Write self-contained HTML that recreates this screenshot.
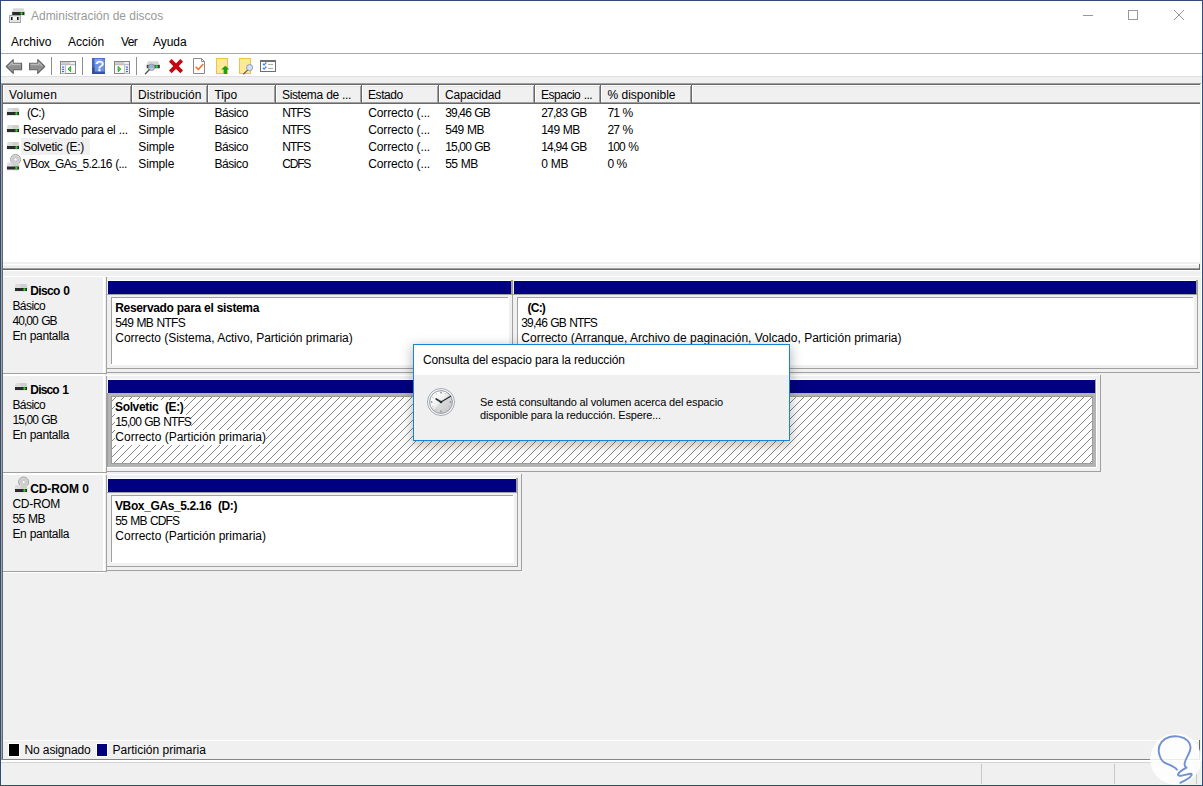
<!DOCTYPE html>
<html lang="es">
<head>
<meta charset="utf-8">
<title>Administración de discos</title>
<style>
html,body{margin:0;padding:0;}
body{width:1203px;height:786px;overflow:hidden;background:#fff;position:relative;font-family:"Liberation Sans",sans-serif;font-size:12px;color:#000;}
.a{position:absolute;}
.t{position:absolute;white-space:nowrap;line-height:15px;height:15px;margin-top:1px;}
.b{font-weight:bold;}
.g{background:#f0f0f0;}
.navy{background:#000080;}
.ln{position:absolute;background:#a0a0a0;}
.dk{position:absolute;background:#696969;}
.wh{position:absolute;background:#fff;}
</style>
</head>
<body>
<!-- window frame -->
<div class="a" style="left:0;top:0;width:1203px;height:786px;background:#324c7a;"></div>
<div class="a" style="left:1px;top:1px;width:1201px;height:784px;background:#fff;"></div>

<!-- title bar -->
<div class="t" style="left:31px;top:8px;letter-spacing:-0.024px;word-spacing:0.024px;color:#999;">Administración de discos</div>
<!-- menu -->
<div class="t" style="left:11px;top:34px;letter-spacing:0.083px;">Archivo</div>
<div class="t" style="left:68px;top:34px;letter-spacing:0.028px;">Acción</div>
<div class="t" style="left:121px;top:34px;letter-spacing:-0.605px;">Ver</div>
<div class="t" style="left:153px;top:34px;letter-spacing:-0.043px;">Ayuda</div>
<div class="a" style="left:1px;top:53px;width:1201px;height:1px;background:#a8a8a8;"></div>
<!-- gray client background -->
<div class="a g" style="left:1px;top:76px;width:1201px;height:709px;"></div>
<div class="a" style="left:1px;top:76px;width:1201px;height:1px;background:#dfdfdf;"></div>
<!-- list view -->
<div id="list">
<div class="ln" style="left:1px;top:83px;width:1200px;height:1px;"></div>
<div class="dk" style="left:2px;top:84px;width:1198px;height:1px;"></div>
<div class="ln" style="left:1px;top:83px;width:1px;height:677px;"></div>
<div class="dk" style="left:2px;top:84px;width:1px;height:676px;"></div>
<div class="wh" style="left:1201px;top:83px;width:1px;height:678px;"></div>
<div class="wh" style="left:3px;top:85px;width:1197px;height:177px;"></div>
<div class="a g" style="left:4px;top:86px;width:1196px;height:16px;"></div>
<div class="a" style="left:4px;top:86px;width:1196px;height:1px;background:#e6e6e6;"></div>
<div class="ln" style="left:3px;top:102px;width:1197px;height:1px;"></div>
<div class="dk" style="left:3px;top:103px;width:1197px;height:1px;"></div>
<div class="ln" style="left:130px;top:86px;width:1px;height:16px;"></div>
<div class="dk" style="left:131px;top:85px;width:1px;height:18px;"></div>
<div class="wh" style="left:132px;top:85px;width:1px;height:17px;"></div>
<div class="ln" style="left:206px;top:86px;width:1px;height:16px;"></div>
<div class="dk" style="left:207px;top:85px;width:1px;height:18px;"></div>
<div class="wh" style="left:208px;top:85px;width:1px;height:17px;"></div>
<div class="ln" style="left:274px;top:86px;width:1px;height:16px;"></div>
<div class="dk" style="left:275px;top:85px;width:1px;height:18px;"></div>
<div class="wh" style="left:276px;top:85px;width:1px;height:17px;"></div>
<div class="ln" style="left:360px;top:86px;width:1px;height:16px;"></div>
<div class="dk" style="left:361px;top:85px;width:1px;height:18px;"></div>
<div class="wh" style="left:362px;top:85px;width:1px;height:17px;"></div>
<div class="ln" style="left:437px;top:86px;width:1px;height:16px;"></div>
<div class="dk" style="left:438px;top:85px;width:1px;height:18px;"></div>
<div class="wh" style="left:439px;top:85px;width:1px;height:17px;"></div>
<div class="ln" style="left:533px;top:86px;width:1px;height:16px;"></div>
<div class="dk" style="left:534px;top:85px;width:1px;height:18px;"></div>
<div class="wh" style="left:535px;top:85px;width:1px;height:17px;"></div>
<div class="ln" style="left:599px;top:86px;width:1px;height:16px;"></div>
<div class="dk" style="left:600px;top:85px;width:1px;height:18px;"></div>
<div class="wh" style="left:601px;top:85px;width:1px;height:17px;"></div>
<div class="ln" style="left:690px;top:86px;width:1px;height:16px;"></div>
<div class="dk" style="left:691px;top:85px;width:1px;height:18px;"></div>
<div class="wh" style="left:692px;top:85px;width:1px;height:17px;"></div>
<div class="t" style="left:9px;top:87px;letter-spacing:0.185px;">Volumen</div>
<div class="t" style="left:138px;top:87px;letter-spacing:0.075px;">Distribución</div>
<div class="t" style="left:214.5px;top:87px;letter-spacing:-0.102px;">Tipo</div>
<div class="t" style="left:282px;top:87px;letter-spacing:-0.365px;word-spacing:0.365px;">Sistema de ...</div>
<div class="t" style="left:368px;top:87px;letter-spacing:-0.427px;">Estado</div>
<div class="t" style="left:445px;top:87px;letter-spacing:-0.197px;">Capacidad</div>
<div class="t" style="left:541px;top:87px;letter-spacing:-0.483px;word-spacing:0.483px;">Espacio ...</div>
<div class="t" style="left:607.5px;top:87px;">% disponible</div>
<div class="t" style="left:27px;top:105px;letter-spacing:-0.65px;">(C:)</div>
<div class="t" style="left:138.3px;top:105px;letter-spacing:-0.131px;">Simple</div>
<div class="t" style="left:214.5px;top:105px;letter-spacing:-0.439px;">Básico</div>
<div class="t" style="left:282.2px;top:105px;letter-spacing:-0.861px;">NTFS</div>
<div class="t" style="left:368.2px;top:105px;letter-spacing:-0.122px;word-spacing:0.122px;">Correcto (...</div>
<div class="t" style="left:445.3px;top:105px;letter-spacing:-0.872px;word-spacing:0.872px;">39,46 GB</div>
<div class="t" style="left:541.2px;top:105px;letter-spacing:-0.786px;word-spacing:0.786px;">27,83 GB</div>
<div class="t" style="left:607.6px;top:105px;letter-spacing:-0.92px;word-spacing:0.92px;">71 %</div>
<div class="t" style="left:23px;top:122px;letter-spacing:-0.378px;word-spacing:0.378px;">Reservado para el ...</div>
<div class="t" style="left:138.3px;top:122px;letter-spacing:-0.131px;">Simple</div>
<div class="t" style="left:214.5px;top:122px;letter-spacing:-0.439px;">Básico</div>
<div class="t" style="left:282.2px;top:122px;letter-spacing:-0.861px;">NTFS</div>
<div class="t" style="left:368.2px;top:122px;letter-spacing:-0.122px;word-spacing:0.122px;">Correcto (...</div>
<div class="t" style="left:445.3px;top:122px;letter-spacing:-0.552px;word-spacing:0.552px;">549 MB</div>
<div class="t" style="left:541.2px;top:122px;letter-spacing:-0.572px;word-spacing:0.572px;">149 MB</div>
<div class="t" style="left:607.6px;top:122px;letter-spacing:-0.92px;word-spacing:0.92px;">27 %</div>
<div class="a g" style="left:21px;top:138px;width:69px;height:17px;"></div>
<div class="t" style="left:23px;top:139px;letter-spacing:-0.307px;word-spacing:0.307px;">Solvetic (E:)</div>
<div class="t" style="left:138.3px;top:139px;letter-spacing:-0.131px;">Simple</div>
<div class="t" style="left:214.5px;top:139px;letter-spacing:-0.439px;">Básico</div>
<div class="t" style="left:282.2px;top:139px;letter-spacing:-0.861px;">NTFS</div>
<div class="t" style="left:368.2px;top:139px;letter-spacing:-0.122px;word-spacing:0.122px;">Correcto (...</div>
<div class="t" style="left:445.3px;top:139px;letter-spacing:-0.872px;word-spacing:0.872px;">15,00 GB</div>
<div class="t" style="left:541.2px;top:139px;letter-spacing:-0.786px;word-spacing:0.786px;">14,94 GB</div>
<div class="t" style="left:607.6px;top:139px;letter-spacing:-0.933px;word-spacing:0.933px;">100 %</div>
<div class="t" style="left:23px;top:156px;letter-spacing:-0.656px;word-spacing:0.656px;">VBox_GAs_5.2.16 (...</div>
<div class="t" style="left:138.3px;top:156px;letter-spacing:-0.131px;">Simple</div>
<div class="t" style="left:214.5px;top:156px;letter-spacing:-0.439px;">Básico</div>
<div class="t" style="left:282.2px;top:156px;letter-spacing:-1.193px;">CDFS</div>
<div class="t" style="left:368.2px;top:156px;letter-spacing:-0.122px;word-spacing:0.122px;">Correcto (...</div>
<div class="t" style="left:445.3px;top:156px;letter-spacing:-0.597px;word-spacing:0.597px;">55 MB</div>
<div class="t" style="left:541.2px;top:156px;letter-spacing:-0.372px;word-spacing:0.372px;">0 MB</div>
<div class="t" style="left:607.6px;top:156px;letter-spacing:-1.044px;word-spacing:1.044px;">0 %</div>
</div>
<!-- disks -->
<div id="disks">
<div class="a g" style="left:3px;top:262px;width:1197px;height:6px;"></div>
<div class="wh" style="left:3px;top:264px;width:1196px;height:1px;"></div>
<div class="ln" style="left:3px;top:268px;width:1197px;height:1px;"></div>
<div class="dk" style="left:3px;top:269px;width:1197px;height:1px;"></div>
<div class="dk" style="left:1199px;top:264px;width:1px;height:6px;"></div>
<div class="wh" style="left:3px;top:270px;width:1198px;height:1px;"></div>
<div class="a g" style="left:3px;top:271px;width:1198px;height:489px;"></div>
<div class="wh" style="left:3px;top:276px;width:101px;height:1px;"></div>
<div class="wh" style="left:103px;top:276px;width:2px;height:97px;"></div>
<div class="ln" style="left:106px;top:277px;width:1px;height:97px;"></div>
<div class="ln" style="left:3px;top:373px;width:104px;height:1px;"></div>
<div class="wh" style="left:3px;top:374px;width:102px;height:1px;"></div>
<div class="t b" style="left:30.3px;top:283px;letter-spacing:-0.631px;word-spacing:0.631px;">Disco 0</div>
<div class="t" style="left:12.4px;top:298px;letter-spacing:-0.555px;">Básico</div>
<div class="t" style="left:12.4px;top:313px;letter-spacing:-0.915px;word-spacing:0.915px;">40,00 GB</div>
<div class="t" style="left:12.4px;top:328px;letter-spacing:-0.325px;word-spacing:0.325px;">En pantalla</div>
<div class="wh" style="left:107px;top:276px;width:1094px;height:1px;"></div>
<div class="ln" style="left:106px;top:372px;width:1094px;height:1px;"></div>
<div class="wh" style="left:108px;top:280px;width:403px;height:1px;"></div>
<div class="a navy" style="left:108px;top:281px;width:403px;height:13px;"></div>
<div class="ln" style="left:511px;top:280px;width:2px;height:14px;"></div>
<div class="ln" style="left:512px;top:294px;width:1px;height:75px;"></div>
<div class="ln" style="left:107px;top:294px;width:405px;height:1px;"></div>
<div class="ln" style="left:107px;top:368px;width:406px;height:1px;"></div>
<div class="wh" style="left:111px;top:297px;width:398px;height:68px;"></div>
<div class="ln" style="left:111px;top:297px;width:397px;height:1px;"></div>
<div class="ln" style="left:111px;top:297px;width:1px;height:67px;"></div>
<div class="t b" style="left:115.3px;top:300px;letter-spacing:-0.351px;word-spacing:0.351px;">Reservado para el sistema</div>
<div class="t" style="left:115.3px;top:315px;letter-spacing:-0.703px;word-spacing:0.703px;">549 MB NTFS</div>
<div class="t" style="left:115.3px;top:330px;letter-spacing:-0.048px;word-spacing:0.048px;">Correcto (Sistema, Activo, Partición primaria)</div>
<div class="wh" style="left:514px;top:280px;width:682px;height:1px;"></div>
<div class="a navy" style="left:514px;top:281px;width:682px;height:13px;"></div>
<div class="ln" style="left:1196px;top:280px;width:2px;height:14px;"></div>
<div class="ln" style="left:1197px;top:294px;width:1px;height:75px;"></div>
<div class="ln" style="left:513px;top:294px;width:684px;height:1px;"></div>
<div class="ln" style="left:513px;top:368px;width:685px;height:1px;"></div>
<div class="wh" style="left:517px;top:297px;width:677px;height:68px;"></div>
<div class="ln" style="left:517px;top:297px;width:676px;height:1px;"></div>
<div class="ln" style="left:517px;top:297px;width:1px;height:67px;"></div>
<div class="t b" style="left:527.5px;top:300px;letter-spacing:-0.764px;">(C:)</div>
<div class="t" style="left:521.3px;top:315px;letter-spacing:-0.88px;word-spacing:0.88px;">39,46 GB NTFS</div>
<div class="t" style="left:521.3px;top:330px;">Correcto (Arranque, Archivo de paginación, Volcado, Partición primaria)</div>
<div class="wh" style="left:3px;top:375px;width:101px;height:1px;"></div>
<div class="wh" style="left:103px;top:375px;width:2px;height:97px;"></div>
<div class="ln" style="left:106px;top:376px;width:1px;height:97px;"></div>
<div class="ln" style="left:3px;top:472px;width:104px;height:1px;"></div>
<div class="wh" style="left:3px;top:473px;width:102px;height:1px;"></div>
<div class="t b" style="left:30.3px;top:382px;letter-spacing:-0.831px;word-spacing:0.831px;">Disco 1</div>
<div class="t" style="left:12.4px;top:397px;letter-spacing:-0.555px;">Básico</div>
<div class="t" style="left:12.4px;top:412px;letter-spacing:-0.886px;word-spacing:0.886px;">15,00 GB</div>
<div class="t" style="left:12.4px;top:427px;letter-spacing:-0.325px;word-spacing:0.325px;">En pantalla</div>
<div class="wh" style="left:107px;top:375px;width:993px;height:1px;"></div>
<div class="ln" style="left:1100px;top:375px;width:1px;height:97px;"></div>
<div class="ln" style="left:106px;top:471px;width:995px;height:1px;"></div>
<div class="wh" style="left:108px;top:379px;width:987px;height:1px;"></div>
<div class="a navy" style="left:108px;top:380px;width:987px;height:13px;"></div>
<div class="ln" style="left:1095px;top:379px;width:1px;height:14px;"></div>
<div class="wh" style="left:1096px;top:379px;width:1px;height:89px;"></div>
<div class="a" style="left:107px;top:393px;width:989px;height:74px;background:#b4b4b4;"></div>
<div class="wh" style="left:107px;top:467px;width:989px;height:1px;"></div>
<div class="ln" style="left:107px;top:393px;width:1px;height:74px;"></div>
<div class="a" style="left:111px;top:396px;width:982px;height:68px;background:#9c9c9c;"></div>
<svg class="a" style="left:112px;top:397px;" width="980" height="66"><defs><pattern id="h" width="8" height="8" patternUnits="userSpaceOnUse" x="-5" y="0"><rect x="0" y="0" width="1" height="1" fill="#868686"/><rect x="7" y="1" width="1" height="1" fill="#868686"/><rect x="6" y="2" width="1" height="1" fill="#868686"/><rect x="5" y="3" width="1" height="1" fill="#868686"/><rect x="4" y="4" width="1" height="1" fill="#868686"/><rect x="3" y="5" width="1" height="1" fill="#868686"/><rect x="2" y="6" width="1" height="1" fill="#868686"/><rect x="1" y="7" width="1" height="1" fill="#868686"/></pattern></defs><rect width="100%" height="100%" fill="#fff"/><rect width="100%" height="100%" fill="url(#h)"/></svg>
<div class="t b" style="left:115px;top:399px;letter-spacing:-0.349px;word-spacing:0.349px;background:#fff;">Solvetic&nbsp; (E:)</div>
<div class="t" style="left:115.3px;top:414px;letter-spacing:-0.88px;word-spacing:0.88px;background:#fff;">15,00 GB NTFS</div>
<div class="t" style="left:115.3px;top:429px;background:#fff;">Correcto (Partición primaria)</div>
<div class="wh" style="left:3px;top:474px;width:101px;height:1px;"></div>
<div class="wh" style="left:103px;top:474px;width:2px;height:97px;"></div>
<div class="ln" style="left:106px;top:475px;width:1px;height:97px;"></div>
<div class="ln" style="left:3px;top:571px;width:104px;height:1px;"></div>
<div class="wh" style="left:3px;top:572px;width:102px;height:1px;"></div>
<div class="t b" style="left:30.3px;top:481px;letter-spacing:-0.135px;word-spacing:0.135px;">CD-ROM 0</div>
<div class="t" style="left:12.4px;top:496px;letter-spacing:-0.271px;">CD-ROM</div>
<div class="t" style="left:12.4px;top:511px;letter-spacing:-0.497px;word-spacing:0.497px;">55 MB</div>
<div class="t" style="left:12.4px;top:526px;letter-spacing:-0.325px;word-spacing:0.325px;">En pantalla</div>
<div class="wh" style="left:107px;top:474px;width:414px;height:1px;"></div>
<div class="ln" style="left:521px;top:474px;width:1px;height:97px;"></div>
<div class="ln" style="left:106px;top:570px;width:416px;height:1px;"></div>
<div class="wh" style="left:108px;top:478px;width:408px;height:1px;"></div>
<div class="a navy" style="left:108px;top:479px;width:408px;height:13px;"></div>
<div class="ln" style="left:516px;top:478px;width:2px;height:14px;"></div>
<div class="ln" style="left:517px;top:492px;width:1px;height:75px;"></div>
<div class="ln" style="left:107px;top:492px;width:410px;height:1px;"></div>
<div class="ln" style="left:107px;top:566px;width:411px;height:1px;"></div>
<div class="wh" style="left:111px;top:495px;width:403px;height:68px;"></div>
<div class="ln" style="left:111px;top:495px;width:402px;height:1px;"></div>
<div class="ln" style="left:111px;top:495px;width:1px;height:67px;"></div>
<div class="t b" style="left:115px;top:498px;letter-spacing:-0.384px;word-spacing:0.384px;">VBox_GAs_5.2.16&nbsp; (D:)</div>
<div class="t" style="left:115.3px;top:513px;letter-spacing:-0.848px;word-spacing:0.848px;">55 MB CDFS</div>
<div class="t" style="left:115.3px;top:528px;">Correcto (Partición primaria)</div>
</div>
<!-- legend / status -->
<div id="legend">
<div class="wh" style="left:3px;top:740px;width:1196px;height:1px;"></div>
<div class="dk" style="left:1199px;top:740px;width:1px;height:20px;"></div>
<div class="a" style="left:8px;top:743px;width:10px;height:12px;background:#000;border:1px solid #fff;"></div>
<div class="t" style="left:24.4px;top:742px;letter-spacing:-0.119px;word-spacing:0.119px;">No asignado</div>
<div class="a" style="left:96px;top:743px;width:10px;height:12px;background:#000080;border:1px solid #fff;"></div>
<div class="t" style="left:112.5px;top:742px;">Partición primaria</div>
<div class="a" style="left:2px;top:759px;width:1198px;height:1px;background:#858585;"></div>
<div class="wh" style="left:1px;top:760px;width:1201px;height:2px;"></div>
<div class="a" style="left:1px;top:762px;width:1201px;height:1px;background:#d4d4d4;"></div>
<div class="a" style="left:981px;top:764px;width:1px;height:20px;background:#c8c8c8;"></div>
<div class="a" style="left:1114px;top:764px;width:1px;height:20px;background:#c8c8c8;"></div>
<div class="a" style="left:1196px;top:764px;width:1px;height:20px;background:#c8c8c8;"></div>
</div>
<!-- icons -->
<div id="icons">
<svg class="a" style="left:0;top:0;" width="300" height="180" viewBox="0 0 300 180">
<defs><linearGradient id="ag" x1="0" y1="0" x2="0" y2="1"><stop offset="0" stop-color="#bcbcbc"/><stop offset="0.55" stop-color="#8c8c8c"/><stop offset="1" stop-color="#a8a8a8"/></linearGradient><linearGradient id="hg" x1="0" y1="0" x2="1" y2="1"><stop offset="0" stop-color="#4f7fd8"/><stop offset="1" stop-color="#3460bd"/></linearGradient></defs>
<path d="M13.2 8.3 H23.6 L24.8 12 H11.8 Z" fill="#dadada"/>
<rect x="11.6" y="11.8" width="13.4" height="4" fill="#e4e4e4"/>
<rect x="12.2" y="12" width="12.2" height="3" fill="#2b2b2b"/>
<rect x="20.4" y="12.6" width="2.2" height="1.8" fill="#1fe01f"/><rect x="21" y="12.2" width="1" height="2.6" fill="#1fe01f"/>
<rect x="9.5" y="15.5" width="11" height="7" fill="#e2e2e2" stroke="#a6a6a6" stroke-width="1"/>
<rect x="11" y="17" width="1.6" height="3" fill="#111"/><rect x="17" y="17" width="1.6" height="3" fill="#111"/><rect x="12.8" y="17.2" width="4" height="2.4" fill="#fafafa"/>
<path d="M6.3 66.5 L13.2 59.6 V63.2 H21.6 V69.8 H13.2 V73.4 Z" fill="url(#ag)" stroke="#606060" stroke-width="1.1" stroke-linejoin="round"/>
<path d="M8.2 66.5 L12.2 62.5 V64.3 H20.5" fill="none" stroke="#d2d2d2" stroke-width="0.9" stroke-opacity="0.8"/>
<path d="M44.7 66.5 L37.8 59.6 V63.2 H29.6 V69.8 H37.8 V73.4 Z" fill="url(#ag)" stroke="#606060" stroke-width="1.1" stroke-linejoin="round"/>
<path d="M30.7 64.3 H38.8 V62.5 L42.8 66.5" fill="none" stroke="#d2d2d2" stroke-width="0.9" stroke-opacity="0.8"/>
<rect x="51" y="57" width="1" height="18" fill="#8e8e8e"/>
<rect x="82" y="57" width="1" height="18" fill="#8e8e8e"/>
<rect x="136" y="57" width="1" height="18" fill="#8e8e8e"/>
<rect x="60.5" y="61.5" width="15" height="12" fill="#fff" stroke="#868686" stroke-width="1"/><rect x="61" y="62" width="14" height="3" fill="#e4e4e4"/><rect x="61.5" y="62.5" width="8.5" height="1" fill="#b4b4b4"/><rect x="61" y="64.3" width="14" height="0.9" fill="#aeaeae"/><rect x="71.3" y="62.2" width="1.2" height="1.3" fill="#fff"/><rect x="73.2" y="62.2" width="1.2" height="1.3" fill="#fff"/><rect x="61" y="65.2" width="4" height="8.3" fill="#f1f1f1"/><rect x="65" y="65.2" width="0.9" height="8.3" fill="#b8b8b8"/><rect x="62" y="66.6" width="2.1" height="1.1" fill="#3b6be0"/><rect x="62" y="68.8" width="2.1" height="1.1" fill="#3b6be0"/><rect x="62" y="71.0" width="2.1" height="1.1" fill="#3b6be0"/><path d="M68 69.1 L70.7 66.5 V71.7 Z" fill="#6fd06f" stroke="#12a012" stroke-width="0.9" stroke-linejoin="round"/><rect x="72" y="70.6" width="2.4" height="1.8" fill="#ececec"/>
<rect x="114.5" y="61.5" width="15" height="12" fill="#fff" stroke="#868686" stroke-width="1"/><rect x="115" y="62" width="14" height="3" fill="#e4e4e4"/><rect x="115.5" y="62.5" width="8.5" height="1" fill="#b4b4b4"/><rect x="115" y="64.3" width="14" height="0.9" fill="#aeaeae"/><rect x="125.3" y="62.2" width="1.2" height="1.3" fill="#fff"/><rect x="127.2" y="62.2" width="1.2" height="1.3" fill="#fff"/><rect x="125" y="65.2" width="4" height="8.3" fill="#f1f1f1"/><rect x="124.1" y="65.2" width="0.9" height="8.3" fill="#b8b8b8"/><rect x="125.9" y="66.6" width="2.1" height="1.1" fill="#3b6be0"/><rect x="125.9" y="68.8" width="2.1" height="1.1" fill="#3b6be0"/><rect x="125.9" y="71.0" width="2.1" height="1.1" fill="#3b6be0"/><path d="M120.8 69.1 L118.1 66.5 V71.7 Z" fill="#6fd06f" stroke="#12a012" stroke-width="0.9" stroke-linejoin="round"/><rect x="115.6" y="70.6" width="2" height="1.8" fill="#ececec"/>
<rect x="92" y="58" width="13" height="16" fill="#3f66c4"/>
<rect x="94.6" y="58.8" width="10" height="12.6" fill="#6f92de"/>
<rect x="94.6" y="58.8" width="7" height="5.5" fill="#8aa6e4" fill-opacity="0.7"/>
<rect x="92" y="67.5" width="2.6" height="6.5" fill="#3b4f7a"/><rect x="92" y="72.4" width="13" height="1.6" fill="#2f4f9e"/>
<text x="99.6" y="71.4" font-family="Liberation Sans, sans-serif" font-size="15.5" fill="#fff" stroke="#fff" stroke-width="0.35" text-anchor="middle">?</text>
<path d="M148 61.2 H158.2 L159.4 64.8 H146.8 Z" fill="#d6d6d6"/>
<rect x="146.4" y="64.6" width="13.6" height="4.2" fill="#dedede"/>
<rect x="146.8" y="64.9" width="13" height="3.2" fill="#3a3a3a"/>
<rect x="155.4" y="65.6" width="2.6" height="1.8" fill="#22e022"/><rect x="156.2" y="65.1" width="1" height="2.8" fill="#22e022"/>
<circle cx="151.5" cy="67.3" r="3.2" fill="#b2c6e2" fill-opacity="0.86" stroke="#8292a8" stroke-width="0.9"/>
<path d="M149.2 69.8 L145.4 73.7" stroke="#505050" stroke-width="1.3" stroke-linecap="round"/>
<path d="M170.3 60.4 L181.7 71.8 M181.7 60.4 L170.3 71.8" stroke="#c80410" stroke-width="3.8" stroke-linecap="butt"/>
<path d="M193.5 58.5 H201.5 L204.5 61.5 V73.5 H193.5 Z" fill="#fff" stroke="#8a8a8a" stroke-width="1"/>
<path d="M201.5 58.5 V61.5 H204.5" fill="none" stroke="#8a8a8a" stroke-width="1"/>
<path d="M195.6 66.7 L198.4 69.5 L203.2 63.9" fill="none" stroke="#f26b1d" stroke-width="1.5"/>
<rect x="216.5" y="58.5" width="11" height="15" fill="#ffe896" stroke="#efc440" stroke-width="1"/>
<path d="M225.3 65.8 L229.4 69.6 H227 V74 H223.6 V69.6 H221.2 Z" fill="#1aa01a"/>
<rect x="239.5" y="58.5" width="11" height="15" fill="#ffe896" stroke="#efc440" stroke-width="1"/>
<circle cx="249.6" cy="67.6" r="3.1" fill="#cfe0f8" stroke="#8f9db5" stroke-width="1"/>
<path d="M247.3 70.3 L243.6 74" stroke="#5c5c5c" stroke-width="1.1" stroke-linecap="round"/>
<rect x="260.5" y="60.5" width="15" height="11" fill="#fff" stroke="#6e6e6e" stroke-width="1"/>
<rect x="260" y="60" width="16" height="2" fill="#6e6e6e"/>
<path d="M262.9 63.7 L264.1 65 L266.4 62.4 M262.9 67.8 L264.1 69.1 L266.4 66.5" fill="none" stroke="#3a8ae8" stroke-width="1.3"/>
<rect x="268" y="64" width="5.2" height="0.9" fill="#a6a6a6"/><rect x="268" y="68" width="5.2" height="0.9" fill="#a6a6a6"/>
<path d="M7.6 108 H18.4 L19.4 112 H6.6 Z" fill="#dcdcdc"/><path d="M12.5 108 H18.4 L19.4 112 H12.5 Z" fill="#cfcfcf"/><rect x="6.4" y="111.8" width="13.2" height="4.2" fill="#e6e6e6"/><rect x="7" y="112" width="12" height="3" fill="#2b2b2b"/><rect x="15.3" y="112.6" width="2.2" height="1.8" fill="#1fe01f"/><rect x="15.9" y="112.2" width="1" height="2.6" fill="#1fe01f"/>
<path d="M7.6 125 H18.4 L19.4 129 H6.6 Z" fill="#dcdcdc"/><path d="M12.5 125 H18.4 L19.4 129 H12.5 Z" fill="#cfcfcf"/><rect x="6.4" y="128.8" width="13.2" height="4.2" fill="#e6e6e6"/><rect x="7" y="129" width="12" height="3" fill="#2b2b2b"/><rect x="15.3" y="129.6" width="2.2" height="1.8" fill="#1fe01f"/><rect x="15.9" y="129.2" width="1" height="2.6" fill="#1fe01f"/>
<path d="M7.6 142 H18.4 L19.4 146 H6.6 Z" fill="#dcdcdc"/><path d="M12.5 142 H18.4 L19.4 146 H12.5 Z" fill="#cfcfcf"/><rect x="6.4" y="145.8" width="13.2" height="4.2" fill="#e6e6e6"/><rect x="7" y="146" width="12" height="3" fill="#2b2b2b"/><rect x="15.3" y="146.6" width="2.2" height="1.8" fill="#1fe01f"/><rect x="15.9" y="146.2" width="1" height="2.6" fill="#1fe01f"/>
<circle cx="15.6" cy="159.5" r="5" fill="#d9d9d9" stroke="#9c9c9c" stroke-width="0.9"/><circle cx="15.6" cy="159.5" r="3" fill="none" stroke="#c2c2c2" stroke-width="0.8"/><circle cx="15.6" cy="159.5" r="1.5" fill="#fff" stroke="#aaa" stroke-width="0.5"/><path d="M7.6 162.5 H18.4 L19.4 166.5 H6.6 Z" fill="#dcdcdc"/><path d="M12.5 162.5 H18.4 L19.4 166.5 H12.5 Z" fill="#cfcfcf"/><rect x="6.4" y="166.3" width="13.2" height="4.2" fill="#e6e6e6"/><rect x="7" y="166.5" width="12" height="3" fill="#2b2b2b"/><rect x="15.3" y="167.1" width="2.2" height="1.8" fill="#1fe01f"/><rect x="15.9" y="166.7" width="1" height="2.6" fill="#1fe01f"/>
</svg>
<svg class="a" style="left:0;top:270px;" width="40" height="240" viewBox="0 270 40 240">
<path d="M15.6 284 H26.4 L27.4 288 H14.6 Z" fill="#dcdcdc"/><path d="M20.5 284 H26.4 L27.4 288 H20.5 Z" fill="#cfcfcf"/><rect x="14.4" y="287.8" width="13.2" height="4.2" fill="#e6e6e6"/><rect x="15" y="288" width="12" height="3" fill="#2b2b2b"/><rect x="23.3" y="288.6" width="2.2" height="1.8" fill="#1fe01f"/><rect x="23.9" y="288.2" width="1" height="2.6" fill="#1fe01f"/>
<path d="M15.6 383 H26.4 L27.4 387 H14.6 Z" fill="#dcdcdc"/><path d="M20.5 383 H26.4 L27.4 387 H20.5 Z" fill="#cfcfcf"/><rect x="14.4" y="386.8" width="13.2" height="4.2" fill="#e6e6e6"/><rect x="15" y="387" width="12" height="3" fill="#2b2b2b"/><rect x="23.3" y="387.6" width="2.2" height="1.8" fill="#1fe01f"/><rect x="23.9" y="387.2" width="1" height="2.6" fill="#1fe01f"/>
<circle cx="23.6" cy="482" r="5" fill="#d9d9d9" stroke="#9c9c9c" stroke-width="0.9"/><circle cx="23.6" cy="482" r="3" fill="none" stroke="#c2c2c2" stroke-width="0.8"/><circle cx="23.6" cy="482" r="1.5" fill="#fff" stroke="#aaa" stroke-width="0.5"/><path d="M15.6 485 H26.4 L27.4 489 H14.6 Z" fill="#dcdcdc"/><path d="M20.5 485 H26.4 L27.4 489 H20.5 Z" fill="#cfcfcf"/><rect x="14.4" y="488.8" width="13.2" height="4.2" fill="#e6e6e6"/><rect x="15" y="489" width="12" height="3" fill="#2b2b2b"/><rect x="23.3" y="489.6" width="2.2" height="1.8" fill="#1fe01f"/><rect x="23.9" y="489.2" width="1" height="2.6" fill="#1fe01f"/>
</svg>
</div>
<!-- dialog -->
<div id="dialog">
<div class="a" style="left:413px;top:344px;width:375px;height:95px;border:1px solid #1883d7;background:#f0f0f0;box-shadow:0 3px 11px 1px rgba(0,0,0,0.27);">
<div class="a" style="left:0;top:0;width:375px;height:30px;background:#fff;"></div>
<div class="t" style="left:9px;top:7px;letter-spacing:-0.13px;">Consulta del espacio para la reducción</div>
<div class="t" style="left:66px;top:50px;font-size:11px;letter-spacing:-0.16px;line-height:13px;height:13px;">Se está consultando al volumen acerca del espacio</div>
<div class="t" style="left:66px;top:63px;font-size:11px;letter-spacing:-0.16px;line-height:13px;height:13px;">disponible para la reducción. Espere...</div>
<svg class="a" style="left:12px;top:42px;" width="30" height="30" viewBox="0 0 30 30"><defs><linearGradient id="cg" x1="0.15" y1="0.15" x2="0.85" y2="0.85"><stop offset="0" stop-color="#ffffff"/><stop offset="0.46" stop-color="#efefef"/><stop offset="0.54" stop-color="#d9d9d9"/><stop offset="1" stop-color="#cdcdcd"/></linearGradient></defs><circle cx="15" cy="15" r="13.5" fill="#e8edf3" stroke="#9a9fa6" stroke-width="0.9"/><circle cx="15" cy="15" r="12.4" fill="none" stroke="#ffffff" stroke-width="0.7" stroke-opacity="0.8"/><circle cx="15" cy="15" r="11.4" fill="url(#cg)" stroke="#8c9197" stroke-width="0.9"/><rect x="14.25" y="4.80" width="1.5" height="1.6" fill="#8e8e8e"/><rect x="19.20" y="6.36" width="1" height="1" fill="#a9b0ba"/><rect x="22.64" y="9.80" width="1" height="1" fill="#a9b0ba"/><rect x="23.65" y="14.20" width="1.5" height="1.6" fill="#8e8e8e"/><rect x="22.64" y="19.20" width="1" height="1" fill="#a9b0ba"/><rect x="19.20" y="22.64" width="1" height="1" fill="#a9b0ba"/><rect x="14.25" y="23.60" width="1.5" height="1.6" fill="#8e8e8e"/><rect x="9.80" y="22.64" width="1" height="1" fill="#a9b0ba"/><rect x="6.36" y="19.20" width="1" height="1" fill="#a9b0ba"/><rect x="4.85" y="14.20" width="1.5" height="1.6" fill="#8e8e8e"/><rect x="6.36" y="9.80" width="1" height="1" fill="#a9b0ba"/><rect x="9.80" y="6.36" width="1" height="1" fill="#a9b0ba"/><path d="M15 15 L10.2 12" fill="none" stroke="#333" stroke-width="1.7" stroke-linecap="round"/><path d="M15 15 L24.7 9.3" fill="none" stroke="#262626" stroke-width="1.1" stroke-linecap="round"/><circle cx="15" cy="15" r="1.3" fill="#073737"/></svg>
</div>
</div>
<!-- watermark -->
<div id="wm">
<svg class="a" style="left:1145px;top:728px;" width="58" height="58" viewBox="1145 728 58 58">
<circle cx="1175.7" cy="759.2" r="25.6" fill="#fff" fill-opacity="0.84"/>
<path d="M1176.9 769.6 C1175 767 1171 765.3 1166.5 763.6 C1162 761.8 1159.2 757 1158.7 751 C1158.3 744 1163 738.8 1169.5 737 C1176 735.2 1183.4 736.6 1187.6 740.6 C1191.5 744.5 1191 749.5 1188.6 754 C1186.5 758.2 1184.4 761.5 1184.6 764.6 C1184.7 766.2 1185.4 767.2 1186.5 767.7 C1183.2 769.4 1179.4 771.8 1178.2 774 C1177.4 775.8 1179.6 776 1182 775.6 C1185.4 775 1188.6 773.8 1190.6 773.8 C1192.6 773.9 1191.6 775.8 1189.6 777.4 C1187 779.4 1183.6 781.2 1180.3 782.8" fill="none" stroke="#7291d2" stroke-width="1.9" stroke-linecap="round" stroke-linejoin="round"/>
</svg>
</div>
<div id="ctl">
<svg class="a" style="left:1070px;top:1px;" width="132" height="30" viewBox="1070 1 132 30" shape-rendering="crispEdges">
<rect x="1083" y="15" width="10" height="1" fill="#999"/>
<rect x="1128.5" y="10.5" width="9" height="9" fill="none" stroke="#999" stroke-width="1"/>
<path d="M1174 10 L1184 20 M1184 10 L1174 20" stroke="#999" stroke-width="1" shape-rendering="auto"/>
</svg>
</div>
</body>
</html>
